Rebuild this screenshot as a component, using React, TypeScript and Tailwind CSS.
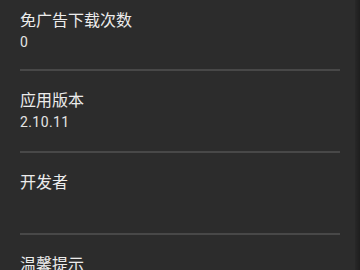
const font = { fontFamily: '"Roboto", "Noto Sans CJK SC", sans-serif' };

interface SettingItem {
  title: string;
  value?: string;
}

const items: SettingItem[] = [
  { title: "免广告下载次数", value: "0" },
  { title: "应用版本", value: "2.10.11" },
  { title: "开发者" },
  { title: "温馨提示" },
];

export default function App() {
  return (
    <div className="relative w-[360px] h-[270px] overflow-hidden bg-[#2c2c2c]" style={font}>
      {items.map((item, i) => (
        <div key={item.title}>
          {i > 0 && <div className="ml-5 mr-5 h-[2px] bg-[#484848]" />}
          <div className={i === 0 ? "h-[69px] px-5 pt-[9px]" : "h-[80px] px-5 pt-[18px]"}>
            <div className="text-[16px] leading-[24px] text-[#ececec]">{item.title}</div>
            {item.value && (
              <div className="text-[14px] leading-[18px] tracking-[0.4px] text-[#e4e4e4] font-['Roboto',sans-serif]">
                {item.value}
              </div>
            )}
          </div>
        </div>
      ))}
      {/* right edge shade */}
      <div className="absolute top-0 right-0 h-full w-[5px] bg-gradient-to-r from-[#282828] to-[#1e1e1e]" />
    </div>
  );
}
